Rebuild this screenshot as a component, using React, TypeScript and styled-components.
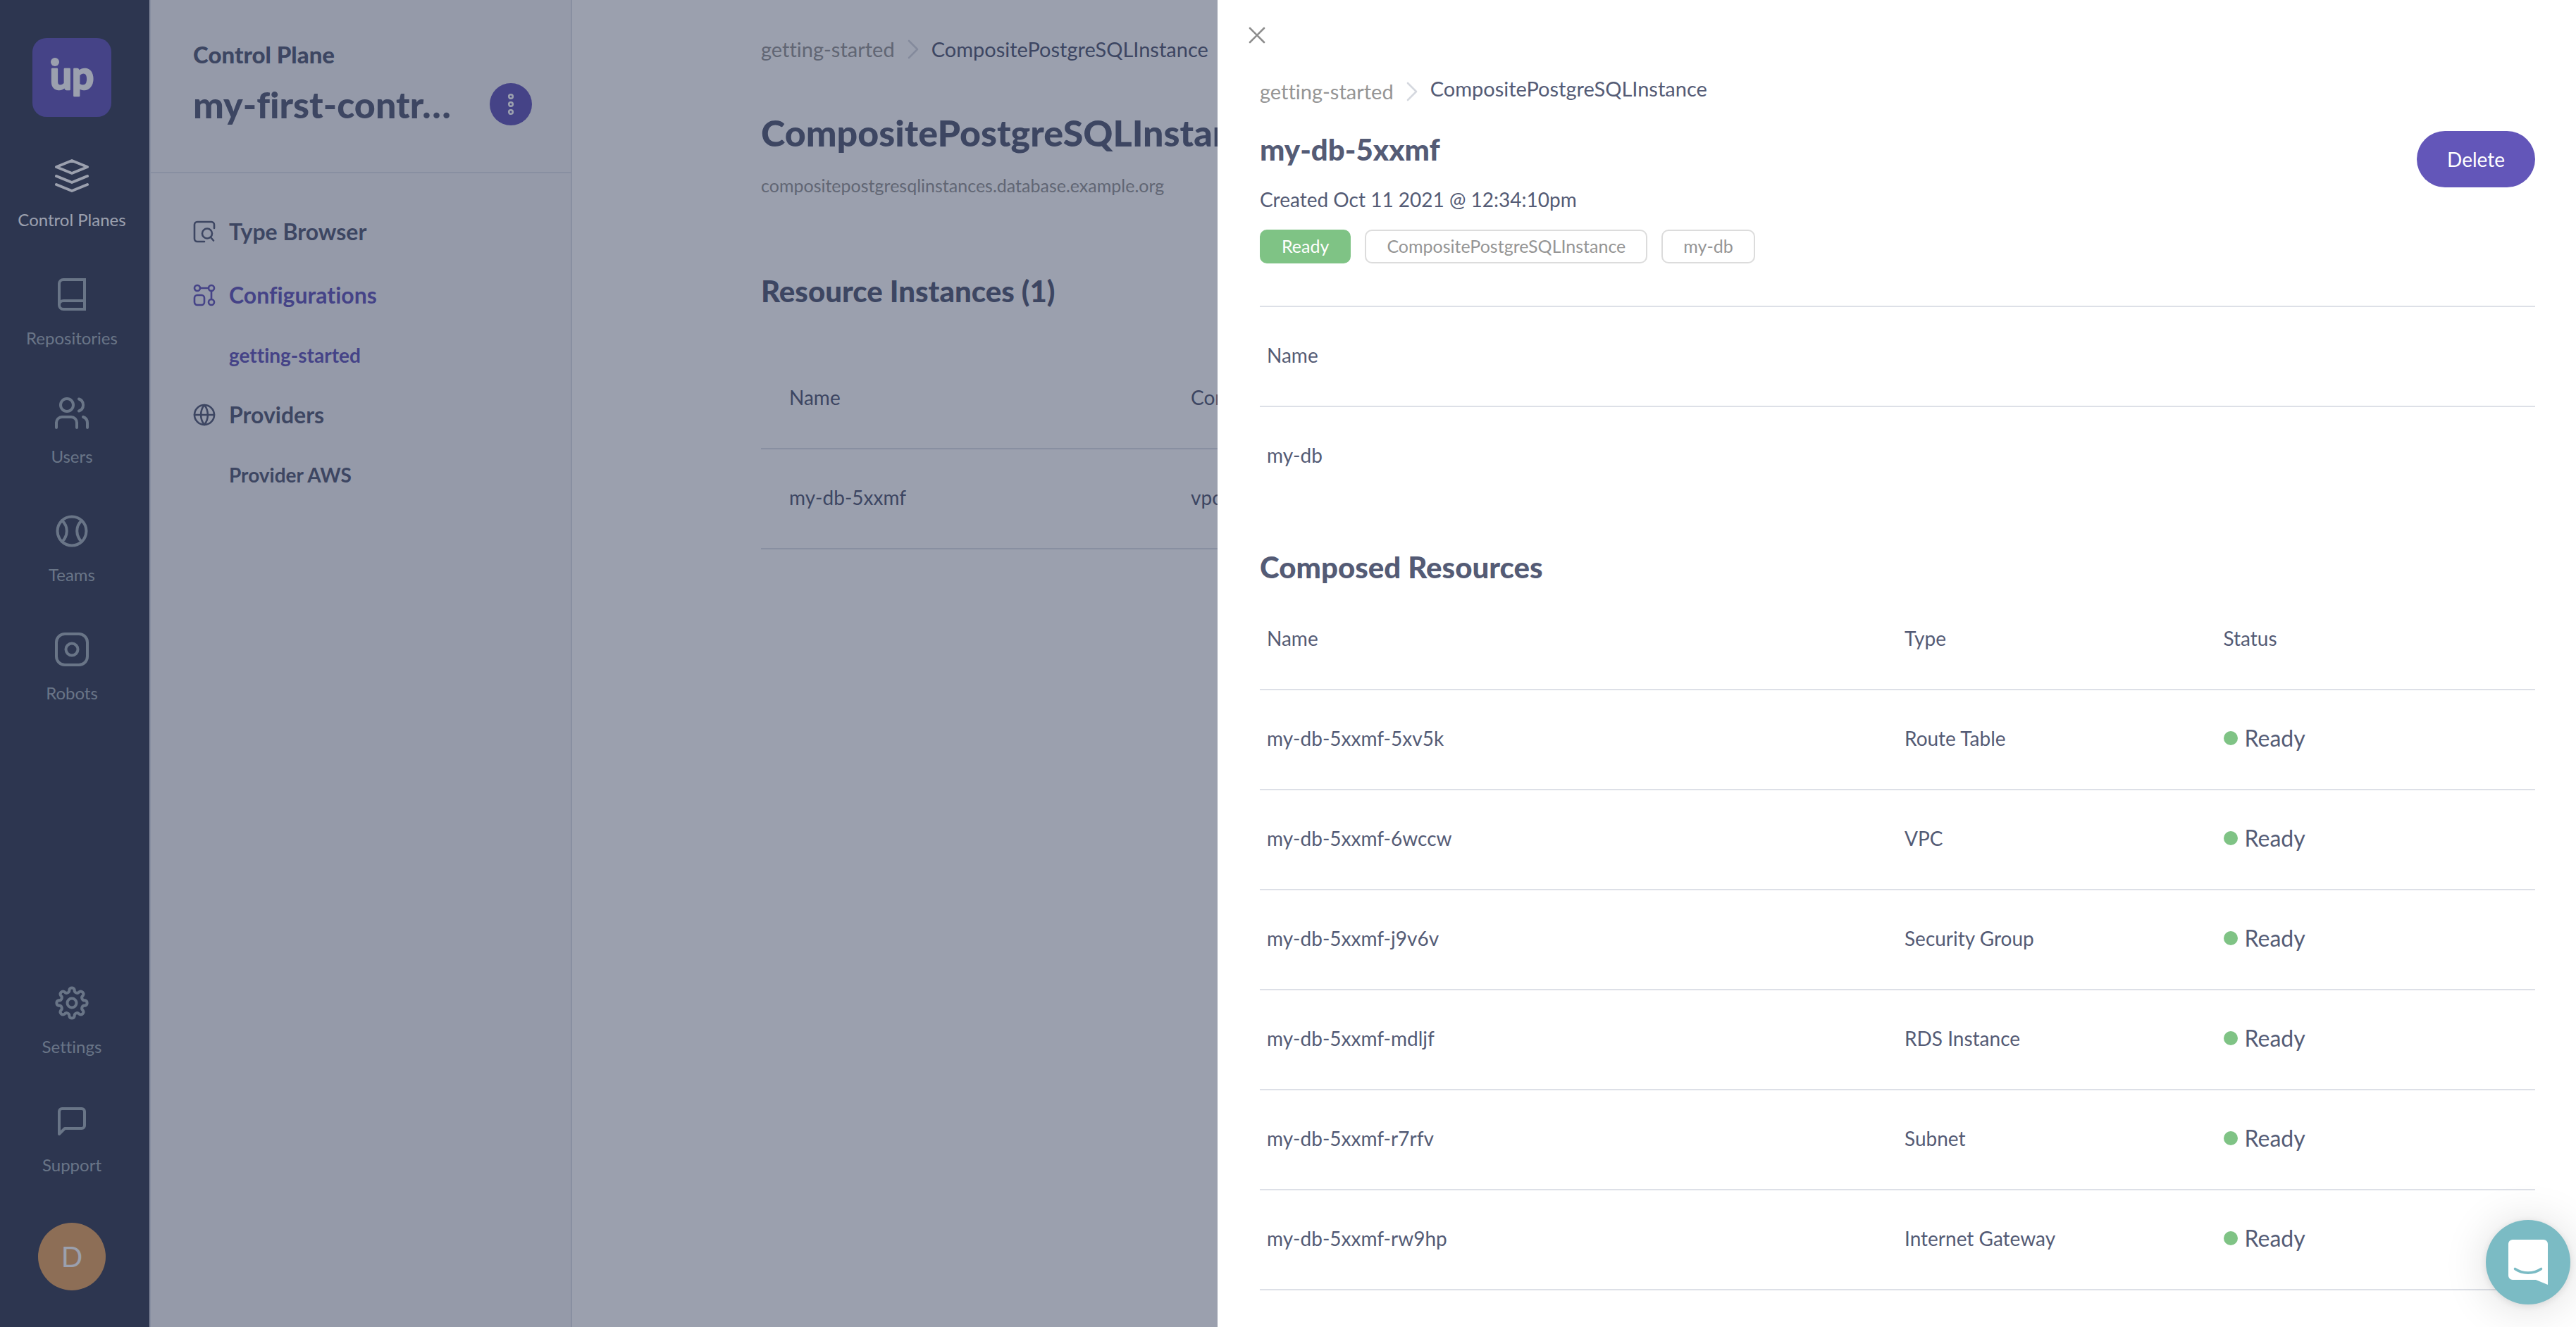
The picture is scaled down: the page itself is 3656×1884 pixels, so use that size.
import React from "react";
import styled, { createGlobalStyle, css } from "styled-components";

const GlobalStyle = createGlobalStyle`
  *, *::before, *::after { box-sizing: border-box; }
  body {
    margin: 0;
    background: #ffffff;
    color: #545b75;
    font-family: Lato, "Open Sans", sans-serif;
    font-size: 28px;
    line-height: 40px;
    font-variant-ligatures: none;
  }
  h1, h2, p, ul { margin: 0; padding: 0; }
  h1, h2 { font-weight: 900; }
  ul { list-style: none; }
  a { color: inherit; text-decoration: none; }
  button { border: 0; padding: 0; font: inherit; cursor: pointer; }
`;

const Shell = styled.div`
  display: flex;
  height: 100vh;
  overflow: hidden;
`;

/* ---------- Sidebar ---------- */

const Sidebar = styled.nav`
  display: flex;
  flex-direction: column;
  align-items: center;
  flex: 0 0 212px;
  padding: 54px 8px 52px 0;
  background: #373e55;
`;

const Logo = styled.a`
  width: 112px;
  height: 112px;
  border-radius: 20px;
  background: #6356b9;
  overflow: hidden;
`;

const SideList = styled.ul<{ $bottom?: boolean }>`
  display: flex;
  flex-direction: column;
  gap: 58px;
  margin-top: ${(p) => (p.$bottom ? "auto" : "52px")};
`;

const SideLink = styled.a<{ $active?: boolean }>`
  display: flex;
  flex-direction: column;
  align-items: center;
  gap: 14px;
  font-size: 24px;
  line-height: 32px;
  white-space: nowrap;
  color: ${(p) => (p.$active ? "#ffffff" : "#a5b1b9")};
`;

const SideIconBox = styled.span`
  display: flex;
  align-items: center;
  height: 64px;
`;

const Avatar = styled.button`
  flex: none;
  width: 96px;
  height: 96px;
  margin-top: 66px;
  border-radius: 50%;
  background: #e5a55f;
  color: #ffffff;
  font-size: 40px;
`;

/* ---------- Control plane panel ---------- */

const Panel = styled.aside`
  flex: 0 0 600px;
  background: #f4f4f6;
  border: solid #dde0e7;
  border-width: 0 2px;
`;

const PanelHeader = styled.header`
  padding: 57px 55px 66px 60px;
  border-bottom: 2px solid #dde0e7;
`;

const PanelKicker = styled.p`
  font-size: 33px;
  font-weight: 900;
`;

const PanelTitleRow = styled.div`
  display: flex;
  align-items: center;
  justify-content: space-between;
  margin-top: 21px;
`;

const PanelTitle = styled.h2`
  font-size: 52px;
  line-height: 60px;
  white-space: nowrap;
`;

const MenuButton = styled.button`
  display: grid;
  place-items: center;
  width: 60px;
  height: 60px;
  border-radius: 50%;
  background: #6356b9;
  color: #ffffff;
`;

const PanelNav = styled.ul`
  padding: 63px 60px;
`;

const PanelGroup = styled.li<{ $leaf?: boolean }>`
  display: flex;
  flex-direction: column;
  gap: 45px;
  margin-bottom: ${(p) => (p.$leaf ? "50px" : "45px")};
`;

const PanelLink = styled.a<{ $active?: boolean; $sub?: boolean }>`
  display: flex;
  align-items: center;
  gap: 19px;
  font-weight: 700;
  font-size: ${(p) => (p.$sub ? "28px" : "32px")};
  padding-left: ${(p) => (p.$sub ? "51px" : "0")};
  color: ${(p) => (p.$active ? "#6356b9" : "#545b75")};
`;

/* ---------- Shared content parts ---------- */

const Crumbs = styled.nav`
  display: flex;
  align-items: center;
  gap: 18px;
  height: 40px;
  font-size: 29px;
  white-space: nowrap;
`;

const CrumbLink = styled.a`
  color: #959595;
`;

const CrumbCurrent = styled.span<{ $raised?: boolean }>`
  ${(p) =>
    p.$raised &&
    css`
      align-self: flex-start;
      line-height: 32px;
    `}
`;

const SectionTitle = styled.h2<{ $top: number }>`
  margin-top: ${(p) => p.$top}px;
  font-size: 42px;
  line-height: 48px;
`;

const DataTable = styled.table<{ $inset: number; $top: number; $ruled?: boolean }>`
  width: 100%;
  margin-top: ${(p) => p.$top}px;
  table-layout: fixed;
  border-collapse: separate;
  border-spacing: 0;
  border-top: ${(p) => (p.$ruled ? "2px solid #dde0e7" : "0")};

  th, td {
    height: 142px;
    padding: 0 0 4px ${(p) => p.$inset}px;
    border-bottom: 2px solid #dde0e7;
    font-weight: 400;
    text-align: left;
    white-space: nowrap;
  }
  ${(p) =>
    p.$ruled &&
    css`
      tbody td { border-bottom-color: transparent; }
    `}
`;

const Col = styled.col<{ $share: number }>`
  width: ${(p) => p.$share}%;
`;

/* ---------- Main page ---------- */

const Main = styled.main`
  flex: 1;
  min-width: 0;
  padding: 50px 296px 0 268px;
  background: #ffffff;
`;

const PageTitle = styled.h1`
  margin-top: 68px;
  font-size: 52px;
  line-height: 60px;
`;

const PageSubtitle = styled.p`
  margin-top: 29px;
  font-size: 25px;
  line-height: 32px;
  color: #959595;
`;

/* ---------- Drawer ---------- */

const Scrim = styled.div`
  position: fixed;
  inset: 0;
  background: rgba(33, 44, 75, 0.45);
`;

const Drawer = styled.section`
  position: fixed;
  top: 0;
  right: 0;
  bottom: 0;
  width: 1928px;
  max-width: 100%;
  padding: 38px 58px 0 44px;
  background: #ffffff;
  overflow: hidden;
`;

const CloseButton = styled.button`
  display: block;
  width: 24px;
  height: 24px;
  background: none;
  color: #8d8d8d;
`;

const DrawerBody = styled.div`
  padding: 48px 0 0 16px;
`;

const DrawerHead = styled.header`
  display: flex;
  justify-content: space-between;
  align-items: flex-start;
  margin-top: 36px;
`;

const Created = styled.p`
  margin-top: 27px;
`;

const Tags = styled.ul`
  display: flex;
  gap: 20px;
  margin-top: 23px;
`;

const Tag = styled.li<{ $ready?: boolean }>`
  height: 48px;
  padding: 0 29px;
  border: 2px solid ${(p) => (p.$ready ? "#7fc385" : "#dcdcdc")};
  border-radius: 10px;
  background: ${(p) => (p.$ready ? "#7fc385" : "#ffffff")};
  color: ${(p) => (p.$ready ? "#ffffff" : "#959595")};
  font-size: 25px;
  line-height: 42px;
`;

const DeleteButton = styled.button`
  width: 168px;
  height: 80px;
  border-radius: 40px;
  background: #6356b9;
  color: #ffffff;
`;

const Status = styled.span`
  display: flex;
  align-items: center;
  gap: 10px;
  font-size: 32px;

  &::before {
    content: "";
    width: 20px;
    height: 20px;
    border-radius: 50%;
    background: #7fc385;
  }
`;

const ChatButton = styled.button`
  position: fixed;
  right: 8px;
  bottom: 32px;
  width: 120px;
  height: 120px;
  border-radius: 50%;
  background: #7bbbc4;
  box-shadow: 0 2px 12px rgba(0, 0, 0, 0.1), 0 4px 64px rgba(0, 0, 0, 0.14);
`;

/* ---------- Icons ---------- */

function SideIcon({ children }: { children: React.ReactNode }) {
  return (
    <svg width="48" height="48" viewBox="0 0 48 48" fill="none" stroke="currentColor" strokeWidth="4" strokeLinecap="round" strokeLinejoin="round" overflow="visible" aria-hidden="true">
      {children}
    </svg>
  );
}

function PanelIcon({ children }: { children: React.ReactNode }) {
  return (
    <svg width="32" height="32" viewBox="0 0 32 32" fill="none" stroke="currentColor" strokeWidth="2.6" strokeLinecap="round" strokeLinejoin="round" aria-hidden="true">
      {children}
    </svg>
  );
}

// Eight round teeth joined by eight round valleys.
const gearPath = (() => {
  const points = Array.from({ length: 16 }, (_, i) => {
    const angle = ((i * 22.5 - 11.25) * Math.PI) / 180;
    return `${(24 + 19 * Math.cos(angle)).toFixed(2)} ${(24 + 19 * Math.sin(angle)).toFixed(2)}`;
  });
  const arcs = points.map((_, i) => `A3.8 3.8 0 0 ${i % 2 === 0 ? 1 : 0} ${points[(i + 1) % 16]}`);
  return `M${points[0]}${arcs.join("")}Z`;
})();

const icons = {
  planes: <path d="M24 2 46 11 24 20 2 11ZM2 24l22 9 22-9M2 36l22 9 22-9" />,
  repositories: <path strokeLinejoin="miter" d="M42 33H12a6 6 0 0 0 0 12h30V3H12a6 6 0 0 0-6 6v30" />,
  users: (
    <>
      <circle cx="17" cy="13" r="9" />
      <path d="M2 45v-7a8 8 0 0 1 8-8h13a8 8 0 0 1 8 8v7M34 4.500a9 9 0 0 1 0 17M40 30a9 9 0 0 1 6 8.500V45" />
    </>
  ),
  teams: (
    <>
      <circle cx="24" cy="24" r="20.500" />
      <path d="M10 9a20 20 0 0 1 0 30M38 9a20 20 0 0 0 0 30" />
    </>
  ),
  robots: (
    <>
      <rect x="2" y="2" width="44" height="44" rx="12" />
      <circle cx="24" cy="24" r="8.500" />
    </>
  ),
  settings: (
    <>
      <path d={gearPath} />
      <circle cx="24" cy="24" r="6.500" />
    </>
  ),
  support: <path d="M42 10v20a4 4 0 0 1-4 4H14l-8 8V10a4 4 0 0 1 4-4h28a4 4 0 0 1 4 4Z" />,
};

function Chevron() {
  return (
    <svg width="16" height="28" viewBox="0 0 16 28" fill="none" stroke="#d5d8df" strokeWidth="2.600" strokeLinecap="round" strokeLinejoin="round" aria-hidden="true">
      <path d="M2 2l12 12L2 26" />
    </svg>
  );
}

/* ---------- Data ---------- */

const topLinks = [
  { label: "Control Planes", icon: icons.planes, active: true },
  { label: "Repositories", icon: icons.repositories },
  { label: "Users", icon: icons.users },
  { label: "Teams", icon: icons.teams },
  { label: "Robots", icon: icons.robots },
];

const bottomLinks = [
  { label: "Settings", icon: icons.settings },
  { label: "Support", icon: icons.support },
];

const resources = [
  ["my-db-5xxmf-5xv5k", "Route Table"],
  ["my-db-5xxmf-6wccw", "VPC"],
  ["my-db-5xxmf-j9v6v", "Security Group"],
  ["my-db-5xxmf-mdljf", "RDS Instance"],
  ["my-db-5xxmf-r7rfv", "Subnet"],
  ["my-db-5xxmf-rw9hp", "Internet Gateway"],
];

type SideItem = { label: string; icon: React.ReactNode; active?: boolean };

function SideItems({ items, bottom }: { items: SideItem[]; bottom?: boolean }) {
  return (
    <SideList $bottom={bottom}>
      {items.map((item) => (
        <li key={item.label}>
          <SideLink href="#" $active={item.active}>
            <SideIconBox>
              <SideIcon>{item.icon}</SideIcon>
            </SideIconBox>
            {item.label}
          </SideLink>
        </li>
      ))}
    </SideList>
  );
}

export default function App() {
  return (
    <>
      <GlobalStyle />
      <Shell>
        <Sidebar>
          <Logo href="#">
            <svg width="112" height="112" viewBox="0 0 112 112" fill="#ffffff">
              <circle cx="32" cy="34" r="6" />
              <text x="25" y="73" fontFamily="Lato, sans-serif" fontWeight="700" fontSize="55" stroke="#ffffff" strokeWidth="2.400" strokeLinejoin="round">up</text>
            </svg>
          </Logo>
          <SideItems items={topLinks} />
          <SideItems items={bottomLinks} bottom />
          <Avatar type="button">D</Avatar>
        </Sidebar>

        <Panel>
          <PanelHeader>
            <PanelKicker>Control Plane</PanelKicker>
            <PanelTitleRow>
              <PanelTitle>my-first-contr…</PanelTitle>
              <MenuButton type="button" aria-label="Menu">
                <svg width="10" height="34" viewBox="0 0 10 34" fill="none" stroke="currentColor" strokeWidth="2.600">
                  <circle cx="5" cy="6" r="2.800" />
                  <circle cx="5" cy="17" r="2.800" />
                  <circle cx="5" cy="28" r="2.800" />
                </svg>
              </MenuButton>
            </PanelTitleRow>
          </PanelHeader>
          <PanelNav>
            <PanelGroup $leaf>
              <PanelLink href="#">
                <PanelIcon>
                  <path d="M30 11V6a4 4 0 0 0-4-4H6a4 4 0 0 0-4 4v20a4 4 0 0 0 4 4h10" />
                  <circle cx="20" cy="18.500" r="7" />
                  <path d="m25 24 4 4.500" />
                </PanelIcon>
                Type Browser
              </PanelLink>
            </PanelGroup>
            <PanelGroup>
              <PanelLink href="#" $active>
                <PanelIcon>
                  <circle cx="6" cy="6" r="4" />
                  <circle cx="26" cy="6" r="4" />
                  <circle cx="26" cy="26" r="4" />
                  <rect x="2" y="16" width="14" height="14" rx="4" />
                  <path d="M10 6h12M26 10v12" />
                </PanelIcon>
                Configurations
              </PanelLink>
              <PanelLink href="#" $active $sub>getting-started</PanelLink>
            </PanelGroup>
            <PanelGroup>
              <PanelLink href="#">
                <PanelIcon>
                  <circle cx="16" cy="16" r="14" />
                  <path d="M2 16h28M16 2c6.500 8 6.500 20 0 28-6.500-8-6.500-20 0-28Z" />
                </PanelIcon>
                Providers
              </PanelLink>
              <PanelLink href="#" $sub>Provider AWS</PanelLink>
            </PanelGroup>
          </PanelNav>
        </Panel>

        <Main>
          <Crumbs>
            <CrumbLink href="#">getting-started</CrumbLink>
            <Chevron />
            <CrumbCurrent>CompositePostgreSQLInstance</CrumbCurrent>
          </Crumbs>
          <PageTitle>CompositePostgreSQLInstance</PageTitle>
          <PageSubtitle>compositepostgresqlinstances.database.example.org</PageSubtitle>
          <SectionTitle $top={110}>Resource Instances (1)</SectionTitle>
          <DataTable $inset={40} $top={59}>
            <colgroup>
              <Col $share={25} />
              <Col $share={75} />
            </colgroup>
            <thead>
              <tr>
                <th>Name</th>
                <th>Composition</th>
              </tr>
            </thead>
            <tbody>
              <tr>
                <td>my-db-5xxmf</td>
                <td>vpc</td>
              </tr>
            </tbody>
          </DataTable>
        </Main>
      </Shell>

      <Scrim />

      <Drawer>
        <CloseButton type="button" aria-label="Close">
          <svg width="24" height="24" viewBox="0 0 24 24" fill="none" stroke="currentColor" strokeWidth="2.600" strokeLinecap="round" display="block">
            <path d="M2 2l20 20M22 2 2 22" />
          </svg>
        </CloseButton>
        <DrawerBody>
          <Crumbs>
            <CrumbLink href="#">getting-started</CrumbLink>
            <Chevron />
            <CrumbCurrent $raised>CompositePostgreSQLInstance</CrumbCurrent>
          </Crumbs>
          <DrawerHead>
            <div>
              <SectionTitle $top={2}>my-db-5xxmf</SectionTitle>
              <Created>Created Oct 11 2021 @ 12:34:10pm</Created>
              <Tags>
                <Tag $ready>Ready</Tag>
                <Tag>CompositePostgreSQLInstance</Tag>
                <Tag>my-db</Tag>
              </Tags>
            </div>
            <DeleteButton type="button">Delete</DeleteButton>
          </DrawerHead>
          <DataTable $inset={10} $top={60} $ruled>
            <thead>
              <tr>
                <th>Name</th>
              </tr>
            </thead>
            <tbody>
              <tr>
                <td>my-db</td>
              </tr>
            </tbody>
          </DataTable>
          <SectionTitle $top={61}>Composed Resources</SectionTitle>
          <DataTable $inset={10} $top={9}>
            <colgroup>
              <Col $share={50} />
              <Col $share={25} />
              <Col $share={25} />
            </colgroup>
            <thead>
              <tr>
                <th>Name</th>
                <th>Type</th>
                <th>Status</th>
              </tr>
            </thead>
            <tbody>
              {resources.map(([name, kind]) => (
                <tr key={name}>
                  <td>{name}</td>
                  <td>{kind}</td>
                  <td>
                    <Status>Ready</Status>
                  </td>
                </tr>
              ))}
            </tbody>
          </DataTable>
        </DrawerBody>
      </Drawer>

      <ChatButton type="button" aria-label="Chat">
        <svg width="120" height="120" viewBox="0 0 120 120" display="block">
          <path fill="#ffffff" d="M38 28h44a6 6 0 0 1 6 6v58l-17-7H38a6 6 0 0 1-6-6V34a6 6 0 0 1 6-6Z" />
          <path fill="none" stroke="#7bbbc4" strokeWidth="3.600" strokeLinecap="round" d="M41.500 69.500c11 7.500 26 7.500 37 0" />
        </svg>
      </ChatButton>
    </>
  );
}
